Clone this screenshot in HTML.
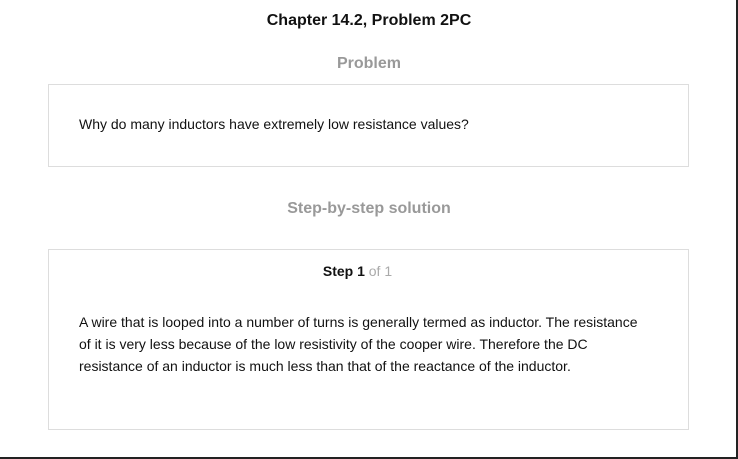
<!DOCTYPE html>
<html><head><style>
body{margin:0;width:738px;height:459px;position:relative;background:#fff;font-family:"Liberation Sans",Arial,sans-serif;overflow:hidden}
.frame{position:absolute;left:0;top:0;width:736px;height:457px;border-right:2px solid #222;border-bottom:2px solid #222}
.t{position:absolute;left:0;width:738px;text-align:center}
.box{position:absolute;left:48px;width:639px;border:1px solid #ddd}
p{margin:0;font-size:14px;color:#111;line-height:22px}
</style></head><body>
<div class="frame"></div>
<div class="t" style="top:12px;font-size:16px;font-weight:bold;color:#111">Chapter 14.2, Problem 2PC</div>
<div class="t" style="top:55px;font-size:16px;font-weight:bold;color:#999">Problem</div>
<div class="box" style="top:84px;height:81px"><p style="position:absolute;left:30px;top:28px">Why do many inductors have extremely low resistance values?</p></div>
<div class="t" style="top:200px;font-size:16px;font-weight:bold;color:#999">Step-by-step solution</div>
<div class="box" style="top:249px;height:179px">
<div style="position:absolute;left:0;width:617px;top:13px;text-align:center;font-size:14px"><b style="color:#111">Step 1</b> <span style="color:#aaa">of 1</span></div>
<p style="position:absolute;left:30px;top:61px;width:573px">A wire that is looped into a number of turns is generally termed as inductor. The resistance of it is very less because of the low resistivity of the cooper wire. Therefore the DC resistance of an inductor is much less than that of the reactance of the inductor.</p>
</div>
</body></html>
